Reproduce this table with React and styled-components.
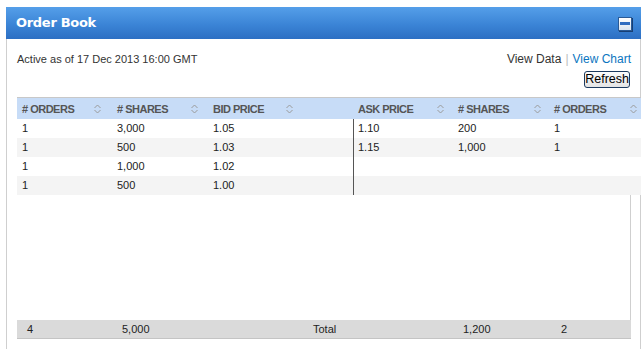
import React from "react";
import styled, { createGlobalStyle } from "styled-components";

const Global = createGlobalStyle`
  html, body { margin: 0; padding: 0; background: #fff; }
  body { height: 349px; overflow: hidden; font-family: "Liberation Sans", Arial, sans-serif; }
`;

const Panel = styled.div`
  margin: 7px 3px 0 6px;
  display: flex;
  flex-direction: column;
`;

const TitleBar = styled.div`
  height: 32px;
  display: flex;
  align-items: center;
  justify-content: space-between;
  padding: 0 9px 0 10px;
  background: linear-gradient(#559fe9, #3b84d6 55%, #2c6fc3);
`;

const Title = styled.h1`
  margin: 0;
  font-family: "DejaVu Sans", Verdana, sans-serif;
  font-weight: bold;
  font-size: 13px;
  letter-spacing: -0.3px;
  line-height: 32px;
  color: #fff;
`;

const MinButton = styled.button`
  width: 14px;
  height: 14px;
  padding: 0;
  border: 1px solid #2a5a96;
  background: linear-gradient(#ffffff, #d9e3ef);
  box-shadow: 1px 1px 0 #173f74;
  display: flex;
  align-items: center;
  justify-content: center;
  margin-top: 1px;
`;

const MinBar = styled.span`
  width: 10px;
  height: 3px;
  background: #2f6cc0;
`;

const Body = styled.div`
  border-left: 1px solid #cfcfcf;
  border-right: 1px solid #cfcfcf;
  padding: 13px 9px 10px 10px;
`;

const Toolbar = styled.div`
  display: flex;
  justify-content: space-between;
  align-items: flex-start;
`;

const Stamp = styled.div`
  font-size: 11px;
  line-height: 14px;
  color: #333;
`;

const Actions = styled.div`
  display: flex;
  flex-direction: column;
  align-items: flex-end;
  gap: 5px;
`;

const Links = styled.div`
  font-size: 12px;
  line-height: 14px;
  color: #333;
`;

const Sep = styled.span`
  color: #bbb;
  margin: 0 4px;
`;

const Link = styled.a`
  color: ${(p) => (p.$active ? "#333" : "#0b76bf")};
  text-decoration: none;
`;

const RefreshButton = styled.button`
  height: 17px;
  padding: 0;
  margin-right: 1px;
  font-family: "Liberation Sans", Arial, sans-serif;
  font-size: 12.5px;
  line-height: 15px;
  color: #000;
  border: 1px solid #1d3b60;
  border-radius: 3px;
  background: linear-gradient(#fdfdfd, #e4e4e4);
`;

const TableWrap = styled.div`
  margin-top: 9px;
  width: 614px;
`;

const COLS = "95px 96px 97px 48px 100px 96px 92px";

const HeadRow = styled.div`
  width: 624px;
  display: grid;
  grid-template-columns: ${COLS};
  height: 21px;
  border-top: 1px solid #c8c8c8;
  background: #c7dcf7;
`;

const HeadCell = styled.div`
  display: flex;
  align-items: center;
  justify-content: space-between;
  padding: 0 ${(p) => p.$iconPad ?? 10}px 0 5px;
  font-size: 11px;
  font-weight: bold;
  letter-spacing: -0.5px;
  color: #555;
`;

const RowsArea = styled.div`
  height: 201px;
  border-right: 1px solid #cfcfcf;
`;

const Row = styled.div`
  width: 624px;
  display: grid;
  grid-template-columns: ${COLS};
  height: 19px;
  background: ${(p) => (p.$alt ? "#f4f4f4" : "#fff")};
`;

const Cell = styled.div`
  padding-left: 5px;
  font-size: 11px;
  line-height: 19px;
  color: #222;
  box-shadow: ${(p) => (p.$divider ? "inset 1px 0 0 #555" : "none")};
`;

const FootRow = styled.div`
  width: 614px;
  overflow: hidden;
  display: grid;
  grid-template-columns: ${COLS};
  height: 18px;
  background: #dadada;
  border-bottom: 1px solid #c4c4c4;
`;

const FootCell = styled.div`
  padding-left: ${(p) => p.$pad || 10}px;
  font-size: 11px;
  line-height: 19px;
  color: #222;
  white-space: nowrap;
`;

const SortIcon = () => (
  <svg width="7" height="10" viewBox="0 0 7 10" fill="none" stroke="#9a9a9a" strokeWidth="1">
    <polyline points="0.5,4 3.5,1 6.5,4" />
    <polyline points="0.5,6 3.5,9 6.5,6" />
  </svg>
);

const headers = [
  { label: "# ORDERS", pad: 11 },
  { label: "# SHARES", pad: 10 },
  { label: "BID PRICE", pad: 12 },
  null,
  { label: "ASK PRICE", pad: 9 },
  { label: "# SHARES", pad: 8 },
  { label: "# ORDERS", pad: 4 },
];

const rows = [
  ["1", "3,000", "1.05", "1.10", "200", "1"],
  ["1", "500", "1.03", "1.15", "1,000", "1"],
  ["1", "1,000", "1.02", "", "", ""],
  ["1", "500", "1.00", "", "", ""],
];

export default function App() {
  return (
    <>
      <Global />
      <Panel>
        <TitleBar>
          <Title>Order Book</Title>
          <MinButton aria-label="Minimize">
            <MinBar />
          </MinButton>
        </TitleBar>
        <Body>
          <Toolbar>
            <Stamp>Active as of 17 Dec 2013 16:00 GMT</Stamp>
            <Actions>
              <Links>
                <Link $active>View Data</Link>
                <Sep>|</Sep>
                <Link href="#">View Chart</Link>
              </Links>
              <RefreshButton>Refresh</RefreshButton>
            </Actions>
          </Toolbar>
          <TableWrap>
            <HeadRow>
              {headers.map((h, i) =>
                h ? (
                  <HeadCell key={i} $iconPad={h.pad}>
                    <span>{h.label}</span>
                    <SortIcon />
                  </HeadCell>
                ) : (
                  <HeadCell key={i} />
                )
              )}
            </HeadRow>
            <RowsArea>
              {rows.map((r, i) => (
                <Row key={i} $alt={i % 2 === 1}>
                  <Cell>{r[0]}</Cell>
                  <Cell>{r[1]}</Cell>
                  <Cell>{r[2]}</Cell>
                  <Cell />
                  <Cell $divider>{r[3]}</Cell>
                  <Cell>{r[4]}</Cell>
                  <Cell>{r[5]}</Cell>
                </Row>
              ))}
            </RowsArea>
            <FootRow>
              <FootCell>4</FootCell>
              <FootCell>5,000</FootCell>
              <FootCell />
              <FootCell $pad={8}>Total</FootCell>
              <FootCell />
              <FootCell $pad={10}>1,200</FootCell>
              <FootCell $pad={12}>2</FootCell>
            </FootRow>
          </TableWrap>
        </Body>
      </Panel>
    </>
  );
}
